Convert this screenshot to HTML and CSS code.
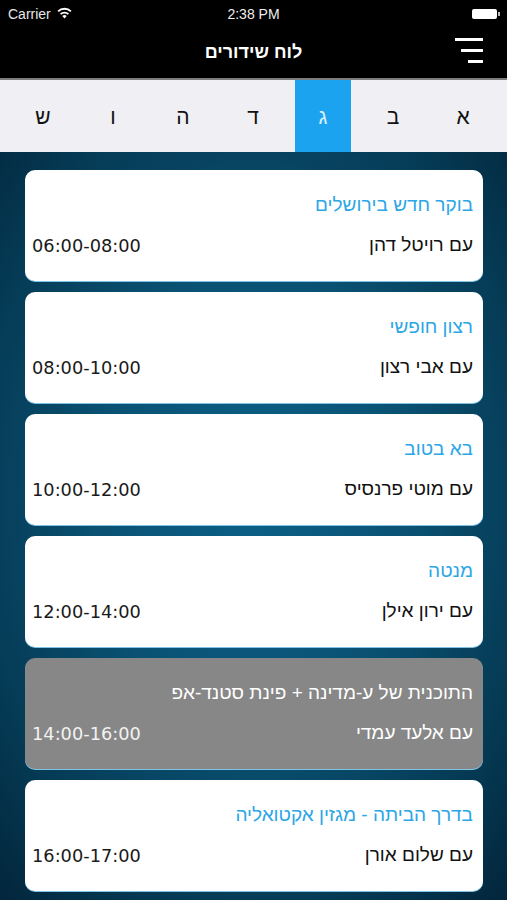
FILE: index.html
```html
<!DOCTYPE html>
<html lang="he">
<head>
    <meta charset="UTF-8">
    <meta name="viewport" content="width=device-width, initial-scale=1.0">
    <title>לוח שידורים</title>
    <link rel="stylesheet" href="styles.css">
</head>
<body>
    <div class="status-bar">
        <div class="carrier">Carrier
            <svg class="wifi" width="15" height="12" viewBox="0 0 15 12">
                <path d="M7.5 11.5 L5.3 9 A3.2 3.2 0 0 1 9.7 9 Z" fill="#fff"/>
                <path d="M3.6 7.2 A5.6 5.6 0 0 1 11.4 7.2" stroke="#fff" stroke-width="1.8" fill="none"/>
                <path d="M1.1 4.4 A9 9 0 0 1 13.9 4.4" stroke="#fff" stroke-width="1.8" fill="none"/>
            </svg>
        </div>
        <div class="clock">2:38 PM</div>
        <div class="battery"><span class="battery-body"></span><span class="battery-nub"></span></div>
    </div>

    <div class="nav-bar">
        <div class="nav-title">לוח שידורים</div>
        <div class="menu-icon">
            <span class="bar bar-long"></span>
            <span class="bar bar-mid"></span>
            <span class="bar bar-short"></span>
        </div>
    </div>

    <div class="days">
        <div class="day">א</div>
        <div class="day">ב</div>
        <div class="day active">ג</div>
        <div class="day">ד</div>
        <div class="day">ה</div>
        <div class="day">ו</div>
        <div class="day">ש</div>
    </div>

    <div class="schedule">
        <div class="show">
            <div class="show-title">בוקר חדש בירושלים</div>
            <div class="show-row"><span class="host">עם רויטל דהן</span><span class="time">06:00-08:00</span></div>
        </div>
        <div class="show">
            <div class="show-title">רצון חופשי</div>
            <div class="show-row"><span class="host">עם אבי רצון</span><span class="time">08:00-10:00</span></div>
        </div>
        <div class="show">
            <div class="show-title">בא בטוב</div>
            <div class="show-row"><span class="host">עם מוטי פרנסיס</span><span class="time">10:00-12:00</span></div>
        </div>
        <div class="show">
            <div class="show-title">מנטה</div>
            <div class="show-row"><span class="host">עם ירון אילן</span><span class="time">12:00-14:00</span></div>
        </div>
        <div class="show current">
            <div class="show-title">התוכנית של ע-מדינה + פינת סטנד-אפ</div>
            <div class="show-row"><span class="host">עם אלעד עמדי</span><span class="time">14:00-16:00</span></div>
        </div>
        <div class="show">
            <div class="show-title">בדרך הביתה - מגזין אקטואליה</div>
            <div class="show-row"><span class="host">עם שלום אורן</span><span class="time">16:00-17:00</span></div>
        </div>
    </div>
</body>
</html>
```

FILE: styles.css
```css
html, body { margin: 0; padding: 0; height: 100%; overflow: hidden; }
body {
    font-family: "Liberation Sans", Arial, sans-serif;
    background: radial-gradient(ellipse 75% 62% at 50% 55%, #0c6087 0%, #0a5274 40%, #053a54 75%, #02243a 100%);
    background-color: #032d42;
}

.status-bar {
    height: 28px; background: #000; color: #fff;
    display: flex; align-items: center; justify-content: space-between;
    padding: 0 7px 0 8px; font-size: 14px; position: relative;
}
.carrier { display: flex; align-items: center; gap: 6px; color: #e6e6e6; }
.wifi { margin-top: -3px; }
.clock { position: absolute; left: 0; right: 0; text-align: center; font-size: 14px; color: #eee; }
.battery { display: flex; align-items: center; }
.battery-body { width: 25px; height: 10px; background: #fff; border-radius: 2px; }
.battery-nub { width: 2px; height: 4px; background: #bbb; margin-left: 1px; }

.nav-bar {
    height: 50px; background: #000; position: relative;
    display: flex; align-items: center; justify-content: center;
}
.nav-title { color: #fff; font-weight: bold; font-size: 18px; margin-top: -2px; }
.menu-icon {
    position: absolute; right: 24px; top: 10px;
    display: flex; flex-direction: column; align-items: flex-end; gap: 8px;
}
.bar { display: block; height: 3px; background: #fff; }
.bar-long { width: 28px; }
.bar-mid { width: 22px; }
.bar-short { width: 15px; }

.days {
    direction: rtl; display: flex; gap: 14px;
    height: 72px; padding: 0 16px 0 15px;
    background: #efeff4; border-top: 2px solid #7d7d80;
}
.day {
    width: 56px; display: flex; align-items: center; justify-content: center;
    font-size: 21px; color: #111; padding-top: 2px;
}
.day.active { background: #1ca3ef; color: #d8eefc; }

.schedule { padding: 18px 24px 0 25px; display: flex; flex-direction: column; gap: 11px; }
.show {
    direction: rtl; background: #fff; border-radius: 10px;
    height: 111px; box-sizing: border-box; padding: 24px 10px 0 7px;
    box-shadow: 0 1px 0 #7fc4e6;
}
.show-title { font-size: 19px; line-height: 22px; color: #2ba6e6; }
.show-row {
    display: flex; justify-content: space-between; align-items: center;
    margin-top: 18px; height: 22px;
}
.host { font-size: 19px; color: #111; }
.time { direction: ltr; font-family: "DejaVu Sans", Verdana, sans-serif; font-size: 17.8px; color: #1a1a1a; }
.show.current { background: #878787; }
.show.current .show-title, .show.current .host { color: #fff; }
.show.current .time { color: #f2f2f2; }
```
